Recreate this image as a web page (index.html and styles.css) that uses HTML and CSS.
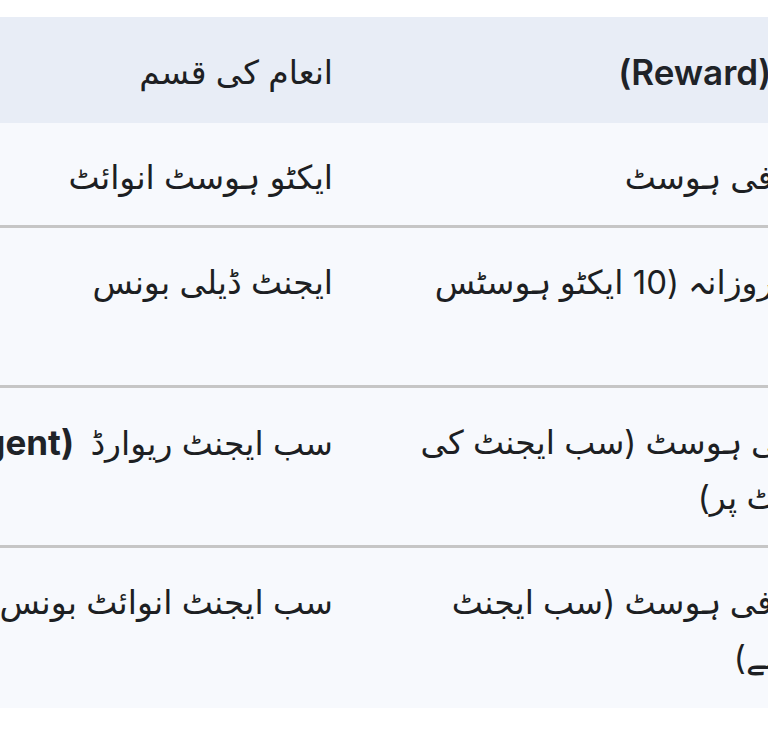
FILE: index.html
```html
<!DOCTYPE html>
<html lang="ur">
<head>
<meta charset="utf-8">
<title>انعامات</title>
<link rel="stylesheet" href="styles.css">
</head>
<body>
<div class="scroller">
  <table class="rewards">
    <colgroup>
      <col class="col-type">
      <col class="col-reward">
    </colgroup>
    <thead>
      <tr>
        <th dir="rtl">انعام کی قسم</th>
        <th dir="rtl">انعامی رقم <b class="en">(Reward)</b></th>
      </tr>
    </thead>
    <tbody>
      <tr>
        <td dir="rtl">ایکٹو ہوسٹ انوائٹ</td>
        <td dir="rtl">500 کوائنز فی ہوسٹ</td>
      </tr>
      <tr>
        <td dir="rtl">ایجنٹ ڈیلی بونس</td>
        <td dir="rtl">500 کوائنز روزانہ (10 ایکٹو ہوسٹس<br>کے لیے)</td>
      </tr>
      <tr>
        <td dir="rtl">سب ایجنٹ ریوارڈ <b class="en">(Sub-Agent)</b></td>
        <td dir="rtl">50 کوائنز فی ہوسٹ (سب ایجنٹ کی<br>کے ہر ہوسٹ پر)</td>
      </tr>
      <tr>
        <td dir="rtl">سب ایجنٹ انوائٹ بونس</td>
        <td dir="rtl">300 کوائنز فی ہوسٹ (سب ایجنٹ<br>کی طرف سے)</td>
      </tr>
    </tbody>
  </table>
</div>
</body>
</html>
```
FILE: styles.css
```css
html, body {
  margin: 0;
  padding: 0;
  background: #ffffff;
}

body {
  font-family: Inter, "DejaVu Sans", sans-serif;
  color: #1d1f23;
}

.scroller {
  width: 768px;
  height: 745px;
  overflow: hidden;
  padding-top: 17px;
  box-sizing: border-box;
}

.rewards {
  border-collapse: collapse;
  table-layout: fixed;
  width: 1093px;
  margin-left: -120px;
  font-size: 33px;
  line-height: 55px;
}

.col-type { width: 493px; }
.col-reward { width: 600px; }

.rewards th,
.rewards td {
  padding: 27px 40px 20px 40px;
  text-align: right;
  vertical-align: top;
  white-space: nowrap;
  font-weight: 400;
}

.rewards thead th {
  background: #e8edf6;
  padding-top: 28px;
  padding-bottom: 22px;
}

.rewards tbody td {
  background: #f7f9fd;
  border-bottom: 3px solid #c6c6c6;
}

.rewards tbody tr + tr td {
  border-top: 1px solid #fcfdff;
}

.rewards tbody tr:last-child td {
  border-bottom: 0;
  padding-bottom: 23px;
}

.en {
  font-size: 35px;
  font-weight: 700;
  color: #1f2328;
}

thead .en {
  font-weight: 600;
}

tbody .en {
  margin-right: 7px;
}
```
